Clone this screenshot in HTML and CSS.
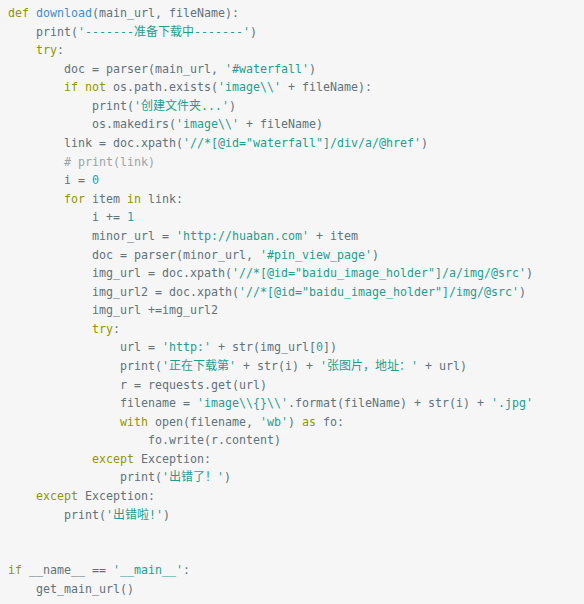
FILE: index.html
```html
<!DOCTYPE html>
<html lang="zh-CN">
<head>
<meta charset="utf-8">
<title>download</title>
<link rel="stylesheet" href="styles.css">
</head>
<body>
<pre class="code"><code><span class="k">def</span> <span class="f">download</span>(main_url, fileName):
    print(<span class="s">'-------<span class="cn">准备下载中</span>-------'</span>)
    <span class="k">try</span>:
        doc = parser(main_url, <span class="s">'#waterfall'</span>)
        <span class="k">if</span> <span class="k">not</span> os.path.exists(<span class="s">'image\\'</span> + fileName):
            print(<span class="s">'<span class="cn">创建文件夹</span>...'</span>)
            os.makedirs(<span class="s">'image\\'</span> + fileName)
        link = doc.xpath(<span class="s">'//*[@id="waterfall"]/div/a/@href'</span>)
        <span class="c"># print(link)</span>
        i = <span class="n">0</span>
        <span class="k">for</span> item <span class="k">in</span> link:
            i += <span class="n">1</span>
            minor_url = <span class="s">'http://huaban.com'</span> + item
            doc = parser(minor_url, <span class="s">'#pin_view_page'</span>)
            img_url = doc.xpath(<span class="s">'//*[@id="baidu_image_holder"]/a/img/@src'</span>)
            img_url2 = doc.xpath(<span class="s">'//*[@id="baidu_image_holder"]/img/@src'</span>)
            img_url +=img_url2
            <span class="k">try</span>:
                url = <span class="s">'http:'</span> + str(img_url[<span class="n">0</span>])
                print(<span class="s">'<span class="cn">正在下载第</span>'</span> + str(i) + <span class="s">'<span class="cn">张图片，地址：</span>'</span> + url)
                r = requests.get(url)
                filename = <span class="s">'image\\{}\\'</span>.format(fileName) + str(i) + <span class="s">'.jpg'</span>
                <span class="k">with</span> open(filename, <span class="s">'wb'</span>) <span class="k">as</span> fo:
                    fo.write(r.content)
            <span class="k">except</span> Exception:
                print(<span class="s">'<span class="cn">出错了！</span>'</span>)
    <span class="k">except</span> Exception:
        print(<span class="s">'<span class="cn">出错啦</span>!'</span>)


<span class="k">if</span> __name__ == <span class="s">'__main__'</span>:
    get_main_url()</code></pre>
</body>
</html>
```
FILE: styles.css
```css
html, body {
  margin: 0;
  padding: 0;
  background: #f6f6f6;
}
.code {
  margin: 0;
  padding: 4px 8px;
  min-height: 604px;
  box-sizing: border-box;
  background: #f6f6f6;
  color: #5f737c;
  font-family: "DejaVu Sans Mono", "Noto Sans CJK SC", monospace;
  font-size: 11.63px;
  line-height: 18.58px;
  white-space: pre;
}
.code code {
  font-family: inherit;
}
.k { color: #919600; }
.f { color: #3b8fd6; }
.s { color: #1f9d90; }
.n { color: #2aa1b3; }
.c { color: #9aa5a8; }
.cn {
  font-family: "Noto Sans CJK SC", sans-serif;
  font-size: 12px;
  line-height: 1;
}
```
